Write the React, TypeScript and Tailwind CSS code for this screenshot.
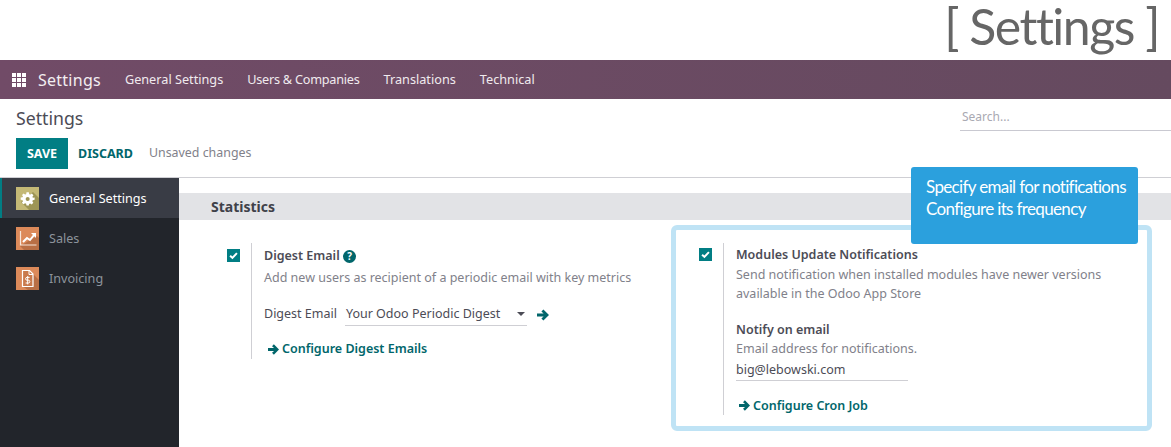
import React from 'react';

const Arrow: React.FC<{ className?: string }> = ({ className }) => (
  <svg viewBox="0 0 12 12" className={className} fill="currentColor">
    <path d="M6.4 0.4 L12 6 L6.4 11.6 L4.4 9.6 L6.6 7.6 H0 V4.4 H6.6 L4.4 2.4 Z" />
  </svg>
);

const CheckBox: React.FC = () => (
  <div className="w-[13px] h-[13px] bg-[#017e84] flex items-center justify-center shrink-0">
    <svg viewBox="0 0 10 10" className="w-[9px] h-[9px]" fill="none" stroke="#fff" strokeWidth="2.2">
      <path d="M1.2 5.2 L3.8 7.6 L8.8 2.4" />
    </svg>
  </div>
);

const AppsIcon: React.FC = () => (
  <div className="grid grid-cols-3 gap-[1px] w-[14px] h-[14px]">
    {Array.from({ length: 9 }).map((_, i) => (
      <span key={i} className="bg-white block" />
    ))}
  </div>
);

const GearTile: React.FC = () => (
  <svg viewBox="0 0 23 23" className="w-[23px] h-[23px]">
    <rect width="23" height="23" fill="#c4b976" />
    <path d="M17 5 L23 11 V23 H13 L5 15 Z" fill="#9d9555" />
    <g transform="translate(4.7 4.7) scale(0.58)">
      <path
        fill="#fff"
        fillRule="evenodd"
        d="M10 1h4l.6 3.2 1.9.8L19.2 3.2l2.8 2.8-1.8 2.7.8 1.9L24 10v4l-3.2.6-.8 1.9 1.8 2.7-2.8 2.8-2.7-1.8-1.9.8L14 24h-4l-.6-3.2-1.9-.8-2.7 1.8L2 19l1.8-2.7-.8-1.9L0 14v-4l3.2-.6.8-1.9L2 6l2.8-2.8 2.7 1.8 1.9-.8zM12 9a3.4 3.4 0 100 7 3.4 3.4 0 000-7z"
      />
    </g>
  </svg>
);

const ChartTile: React.FC = () => (
  <svg viewBox="0 0 23 23" className="w-[23px] h-[23px]">
    <rect width="23" height="23" fill="#dc8a5a" />
    <path d="M21 9 L23 11 V23 H8 L4 19 Z" fill="#b96f45" />
    <path d="M4.5 4v14h16" fill="none" stroke="#f7e6da" strokeWidth="1.2" />
    <path d="M7 15l4-4 3 2 4-5" fill="none" stroke="#fff" strokeWidth="2" />
    <path d="M15 6h5v5z" fill="#fff" />
  </svg>
);

const InvoiceTile: React.FC = () => (
  <svg viewBox="0 0 23 23" className="w-[23px] h-[23px]">
    <rect width="23" height="23" fill="#dc8a5a" />
    <path d="M17 7 L23 13 V23 H12 L6 19 Z" fill="#b96f45" />
    <path d="M6.5 3.5h7l3.5 3.5v12.5H6.5z" fill="#c97a4d" stroke="#fff" strokeWidth="1.2" />
    <path d="M13 3.5v4h4" fill="none" stroke="#fff" strokeWidth="1" />
    <path d="M13.6 10.4H11a1.3 1.3 0 000 2.8h1.4a1.3 1.3 0 010 2.8H9.6M11.7 9v8.4" fill="none" stroke="#fff" strokeWidth="1" />
  </svg>
);

const NavLink: React.FC<{ label: string; className?: string }> = ({ label, className }) => (
  <span className={`text-[12.7px] text-[#f0eaee] whitespace-nowrap ${className ?? ''}`}>{label}</span>
);

const SideItem: React.FC<{ label: string; active?: boolean; children: React.ReactNode }> = ({
  label,
  active,
  children,
}) => (
  <div
    className={
      active
        ? 'h-10 flex items-center gap-[10px] pl-[14px] border-l-2 border-[#017e84] bg-[#393c45] text-white'
        : 'h-10 flex items-center gap-[10px] pl-4 text-[#8d949c]'
    }
  >
    {children}
    <span className="text-[12.6px] leading-[20px] mt-[2px]">{label}</span>
  </div>
);

export default function App() {
  return (
    <div className="relative w-[1171px] h-[447px] overflow-hidden bg-white font-['Noto_Sans',sans-serif] text-[#4c4c56]">
      {/* page title */}
      <div className="h-[60px] flex justify-end items-start pr-[12px]">
        <span className="font-['Lato',sans-serif] text-[#666666] text-[50px] leading-[52px] tracking-[-1.5px] whitespace-nowrap">
          [ Settings ]
        </span>
      </div>

      {/* navbar */}
      <div className="h-[39px] flex items-center bg-gradient-to-r from-[#714b67] to-[#654a5f] pl-[12px]">
        <AppsIcon />
        <span className="ml-3 text-[16px] text-[#f3eef1] tracking-[0.25px]">Settings</span>
        <div className="ml-6 flex items-center gap-6">
          <NavLink label="General Settings" />
          <NavLink label="Users & Companies" className="tracking-[-0.25px]" />
          <NavLink label="Translations" />
          <NavLink label="Technical" />
        </div>
      </div>

      {/* control panel */}
      <div className="h-[79px] border-b border-[#cfcfd4] flex justify-between pl-4">
        <div>
          <div className="text-[17.7px] leading-[24px] mt-[7px] text-[#4c4c56]">Settings</div>
          <div className="flex items-center mt-[8px]">
            <div className="w-[52px] h-[31px] pt-[1px] bg-[#017e84] text-white text-[12.5px] font-bold flex items-center justify-center">
              SAVE
            </div>
            <span className="ml-[10px] mt-[1px] text-[12.5px] font-bold text-[#01666b]">DISCARD</span>
            <span className="ml-4 text-[12.4px] text-[#81818a]">Unsaved changes</span>
          </div>
        </div>
        <div className="w-[211px] h-[32px] border-b border-[#c9c9d1] text-[12px] text-[#a9a9b2] pl-[2px] pt-[9px]">
          Search...
        </div>
      </div>

      {/* body */}
      <div className="flex h-[269px]">
        <div className="w-[179px] bg-[#22252b] shrink-0">
          <SideItem label="General Settings" active>
            <GearTile />
          </SideItem>
          <SideItem label="Sales">
            <ChartTile />
          </SideItem>
          <SideItem label="Invoicing">
            <InvoiceTile />
          </SideItem>
        </div>

        <div className="flex-1 pt-[15px]">
          <div className="h-[27px] bg-[#e2e3e6] flex items-center pl-[32px] text-[14px] font-bold text-[#3f4149]">
            Statistics
          </div>

          <div className="flex mt-[23px]">
            {/* left setting */}
            <div className="w-[472px] flex items-start pl-[48px]">
              <div className="mt-[6px]">
                <CheckBox />
              </div>
              <div className="ml-[11px] pl-[12px] h-[116px] border-l border-[#cfcfd4] text-[12.5px]">
                <div className="h-[24px] mt-[1px] flex items-center font-semibold text-[#4c4c56] gap-[3px]">
                  Digest Email
                  <svg viewBox="0 0 12 12" className="w-[13px] h-[13px] text-[#01666b]">
                    <circle cx="6" cy="6" r="6" fill="currentColor" />
                    <text x="6" y="9.4" fontSize="9" fontWeight="700" textAnchor="middle" fill="#fff">?</text>
                  </svg>
                </div>
                <div className="mt-[1px] text-[#81818a] whitespace-nowrap">
                  Add new users as recipient of a periodic email with key metrics
                </div>
                <div className="flex items-center mt-[16px]">
                  <span>Digest Email</span>
                  <div className="ml-2 w-[182px] h-[22px] border-b border-[#cfcfd4] flex items-center justify-between pl-[1px] pr-[2px]">
                    <span>Your Odoo Periodic Digest</span>
                    <span className="w-0 h-0 border-x-[4px] border-x-transparent border-t-[4px] border-t-[#4c4c56]" />
                  </div>
                  <Arrow className="ml-[10px] w-[12px] h-[12px] text-[#01666b]" />
                </div>
                <div className="flex items-center gap-[3px] mt-[14px] ml-[4px] font-semibold text-[#01666b]">
                  <Arrow className="w-[11px] h-[11px]" />
                  Configure Digest Emails
                </div>
              </div>
            </div>

            {/* right setting */}
            <div className="flex items-start pl-[48px]">
              <div className="mt-[5px]">
                <CheckBox />
              </div>
              <div className="ml-[11px] pl-[12px] h-[172px] border-l border-[#cfcfd4] text-[12.5px] leading-[19px]">
                <div className="h-[22px] flex items-center font-semibold">Modules Update Notifications</div>
                <div className="text-[#81818a] whitespace-nowrap">
                  Send notification when installed modules have newer versions
                  <br />
                  available in the Odoo App Store
                </div>
                <div className="mt-[17px] font-semibold">Notify on email</div>
                <div className="text-[#81818a]">Email address for notifications.</div>
                <div className="w-[172px] h-[23px] border-b border-[#cfcfd4] flex items-center">big@lebowski.com</div>
                <div className="flex items-center gap-[3px] mt-[15px] ml-[3px] font-semibold text-[#01666b]">
                  <Arrow className="w-[11px] h-[11px]" />
                  Configure Cron Job
                </div>
              </div>
            </div>
          </div>
        </div>
      </div>

      {/* tutorial highlight and callout */}
      <div className="absolute left-[671px] top-[225px] w-[481px] h-[206px] border-[5px] border-[#bfe3f5] rounded-[6px]" />
      <div className="absolute left-[911px] top-[167px] w-[227px] h-[77px] bg-[#2ba0dd] rounded-[3px] text-white font-['Lato',sans-serif] text-[17px] leading-[22px] tracking-[-0.65px] pl-[15px] pt-[9px] whitespace-nowrap">
        Specify email for notifications
        <br />
        Configure its frequency
      </div>
    </div>
  );
}
